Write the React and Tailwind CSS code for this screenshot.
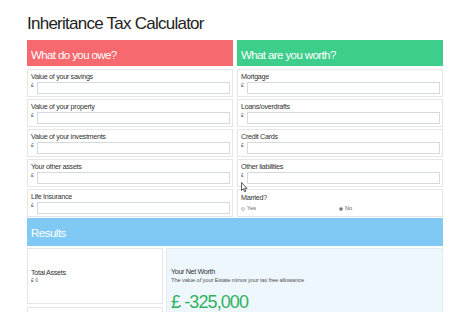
import React from "react";

const owe = ["Value of your savings", "Value of your property", "Value of your investments", "Your other assets", "Life Insurance"];
const worth = ["Mortgage", "Loans/overdrafts", "Credit Cards", "Other liabilities"];

// One money input row
const Field = ({ label }) => (
  <div className="h-[28px] border border-[#e6e6e6] bg-white pl-[3px] pr-[2px] pt-[3px]">
    <div className="text-[7.2px] leading-none tracking-[-0.3px] text-[#333]">{label}</div>
    <div className="mt-[2px] flex items-start">
      <span className="w-[6px] shrink-0 pt-[1px] text-[5px] leading-none text-[#555]">£</span>
      <input className="h-[12px] w-0 min-w-0 flex-1 border border-[#d5dae0] bg-white outline-none" />
    </div>
  </div>
);

const Header = ({ title, color }) => (
  <div className={`h-[26px] px-[4px] pt-[10px] text-[11.5px] leading-none tracking-[-0.6px] text-white ${color}`}>
    {title}
  </div>
);

export default function App() {
  return (
    <div className="relative h-[312px] w-[474px] overflow-hidden bg-white font-['Liberation_Sans',Arial,sans-serif]">
      <div className="ml-[27px] w-[416px]">
        <h1 className="pt-[15px] text-[17px] leading-none tracking-[-0.75px] text-[#222]">Inheritance Tax Calculator</h1>

        <div className="mt-[8px] grid grid-cols-2 gap-x-[4px]">
          <div>
            <Header title="What do you owe?" color="bg-[#f5696f]" />
            <div className="mt-[3px] flex flex-col gap-[2px]">
              {owe.map((l) => (
                <Field key={l} label={l} />
              ))}
            </div>
          </div>
          <div>
            <Header title="What are you worth?" color="bg-[#3dce8b]" />
            <div className="mt-[3px] flex flex-col gap-[2px]">
              {worth.map((l) => (
                <Field key={l} label={l} />
              ))}
              <div className="h-[28px] border border-[#e6e6e6] bg-white pl-[3px] pt-[4px]">
                <div className="text-[7.2px] leading-none tracking-[-0.3px] text-[#333]">Married?</div>
                <div className="mt-[5px] flex h-[6px] items-center text-[5.5px] leading-none text-[#666]">
                  <label className="flex w-[98px] items-center gap-[2px]">
                    <span className="h-[4px] w-[4px] rounded-full border border-[#c4c4c4] bg-[#f2f2f2]"></span>
                    Yes
                  </label>
                  <label className="flex items-center gap-[2px]">
                    <span className="flex h-[4px] w-[4px] items-center justify-center rounded-full border border-[#9a9a9a] bg-white">
                      <span className="h-[2px] w-[2px] rounded-full bg-[#555]"></span>
                    </span>
                    No
                  </label>
                </div>
              </div>
            </div>
          </div>
        </div>

        <div className="mt-[1px] h-[28px] bg-[#80c9f4] px-[4px] pt-[10px] text-[11.5px] leading-none tracking-[-0.5px] text-white">
          Results
        </div>

        <div className="mt-[2px] grid grid-cols-[136px_1fr] gap-x-[3px]">
          <div className="flex flex-col gap-[3px]">
            <div className="flex h-[56px] flex-col justify-center border border-[#e6e6e6] bg-white pl-[3px]">
              <div className="text-[7.2px] leading-none tracking-[-0.3px] text-[#333]">Total Assets</div>
              <div className="mt-[1px] text-[5px] leading-none text-[#555]">£ 0</div>
            </div>
            <div className="h-[56px] border border-[#e6e6e6] bg-white"></div>
          </div>
          <div className="h-[100px] border border-[#e3ebf3] bg-[#eef6fe] pl-[4px] pt-[19px]">
            <div className="text-[7.2px] leading-none tracking-[-0.35px] text-[#333]">Your Net Worth</div>
            <div className="mt-[3px] text-[5.8px] leading-none tracking-[-0.15px] text-[#555]">
              The value of your Estate minus your tax free allowance
            </div>
            <div className="mt-[9px] text-[18px] leading-none tracking-[-0.9px] text-[#2fb35c]">£ -325,000</div>
          </div>
        </div>
      </div>

      {/* mouse pointer */}
      <svg className="absolute left-[241px] top-[182px]" width="7" height="11" viewBox="0 0 7 11">
        <path d="M0.5 0.5 L0.5 8.5 L2.3 6.8 L3.6 9.8 L4.8 9.3 L3.6 6.4 L6 6.4 Z" fill="#fff" stroke="#333" strokeWidth="0.8" strokeLinejoin="round" />
      </svg>
    </div>
  );
}
